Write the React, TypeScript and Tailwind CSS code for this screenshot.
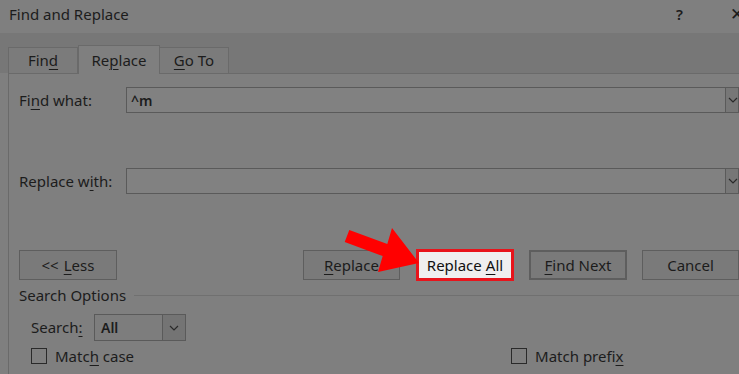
import React from "react";

const U = ({ children }: { children: React.ReactNode }) => (
  <span className="underline underline-offset-[3px] decoration-1">{children}</span>
);

const Btn = ({ children, className = "" }: { children: React.ReactNode; className?: string }) => (
  <div
    className={
      "h-[30px] flex items-center justify-center border border-[#5e5e5e] bg-[#7a7a7a] text-[15px] text-[#1c1c1c] " +
      className
    }
  >
    {children}
  </div>
);

const Chevron = () => (
  <svg width="10" height="6" viewBox="0 0 10 6" fill="none">
    <path d="M1 1 L5 5 L9 1" stroke="#2a2a2a" strokeWidth="1.2" />
  </svg>
);

export default function App() {
  return (
    <div
      className="relative w-[739px] h-[374px] overflow-hidden bg-[#7f7f7f] text-[#1c1c1c]"
      style={{ fontFamily: '"Noto Sans", "Open Sans", sans-serif' }}
    >
      {/* title bar */}
      <div className="h-[33px] flex items-start pt-[3px] pl-[9px] text-[15px]">
        <span>Find and Replace</span>
        <span className="ml-auto mr-[47px] font-semibold text-[15px]">?</span>
        <span className="mr-[-5px] text-[17px] font-light leading-[22px]">✕</span>
      </div>

      {/* tab band */}
      <div className="h-[40px] bg-[#777777] flex items-end pl-[8px]">
        <div className="w-[70px] h-[26px] border border-b-0 border-[#6a6a6a] bg-[#7b7b7b] flex items-center justify-center text-[15px]">
          Fin<U>d</U>
        </div>
        <div className="w-[82px] h-[29px] border border-b-0 border-[#6a6a6a] bg-[#7f7f7f] flex items-center justify-center text-[15px] relative top-[1px]">
          Re<U>p</U>lace
        </div>
        <div className="w-[69px] h-[26px] border border-b-0 border-l-0 border-[#6a6a6a] bg-[#7b7b7b] flex items-center justify-center text-[15px]">
          <U>G</U>o To
        </div>
      </div>

      {/* panel */}
      <div className="ml-[8px] border-l border-t border-[#6a6a6a] bg-[#7f7f7f] pl-[10px] h-[301px] text-[15px]">
        <div className="flex items-center mt-[13px] h-[26px]">
          <span className="w-[107px]">
            Fi<U>n</U>d what:
          </span>
          <div className="flex-1 h-[26px] border border-[#5a5a5a] bg-[#818181] flex items-center pl-[4px] text-[14px] font-semibold">
            ^m
            <div className="ml-auto w-[13px] h-[24px] border-l border-[#5a5a5a] bg-[#777] flex items-center justify-end overflow-hidden">
              <Chevron />
            </div>
          </div>
        </div>

        <div className="flex items-center mt-[55px] h-[26px]">
          <span className="w-[107px]">
            Replace w<U>i</U>th:
          </span>
          <div className="flex-1 h-[26px] border border-[#5a5a5a] bg-[#818181] flex items-center">
            <div className="ml-auto w-[13px] h-[24px] border-l border-[#5a5a5a] bg-[#777] flex items-center justify-end overflow-hidden">
              <Chevron />
            </div>
          </div>
        </div>

        <div className="flex items-center mt-[55px] h-[32px]">
          <Btn className="w-[101px]">
            &lt;&lt; <span className="ml-[5px]"><U>L</U>ess</span>
          </Btn>
          <Btn className="w-[100px] ml-[186px]">
            <U>R</U>eplace
          </Btn>
          <div className="ml-[16px] w-[101px] h-[32px] border-[3px] border-[#e8141b] bg-[#efefef] flex items-center justify-center text-[15px] text-[#111]">
            Replace <span className="ml-[4px]"><U>A</U>ll</span>
          </div>
          <Btn className="w-[101px] ml-[15px] border-2 border-[#1f4f8f]">
            <U>F</U>ind Next
          </Btn>
          <Btn className="w-[100px] ml-[15px]">Cancel</Btn>
        </div>

        <div className="flex items-center mt-[2px] h-[24px]">
          <span className="text-[15px]">Search Options</span>
          <div className="flex-1 ml-[8px] h-px bg-[#707070]" />
        </div>

        <div className="flex items-center mt-[7px] ml-[12px] h-[27px]">
          <span className="w-[63px]">
            Search<U>:</U>
          </span>
          <div className="w-[92px] h-[27px] border border-[#5a5a5a] bg-[#7d7d7d] flex items-center text-[14px] font-semibold">
            <span className="pl-[6px]">All</span>
            <div className="ml-auto w-[23px] h-full border-l border-[#5a5a5a] bg-[#747474] flex items-center justify-center">
              <Chevron />
            </div>
          </div>
        </div>

        <div className="flex items-center mt-[6px] ml-[12px] h-[18px]">
          <div className="w-[16px] h-[16px] border border-[#2a2a2a] bg-[#7f7f7f]" />
          <span className="ml-[8px]">
            Matc<U>h</U> case
          </span>
          <div className="w-[16px] h-[16px] border border-[#2a2a2a] bg-[#7f7f7f] ml-[377px]" />
          <span className="ml-[8px]">
            Match prefi<U>x</U>
          </span>
        </div>
      </div>

      {/* red arrow */}
      <svg className="absolute left-0 top-0 pointer-events-none" width="739" height="374">
        <polygon
          points="349.3,229.9 387.3,243.9 392,228 419,263 378,272 382.7,256.1 344.7,242.1"
          fill="#ff0000"
        />
      </svg>
    </div>
  );
}
